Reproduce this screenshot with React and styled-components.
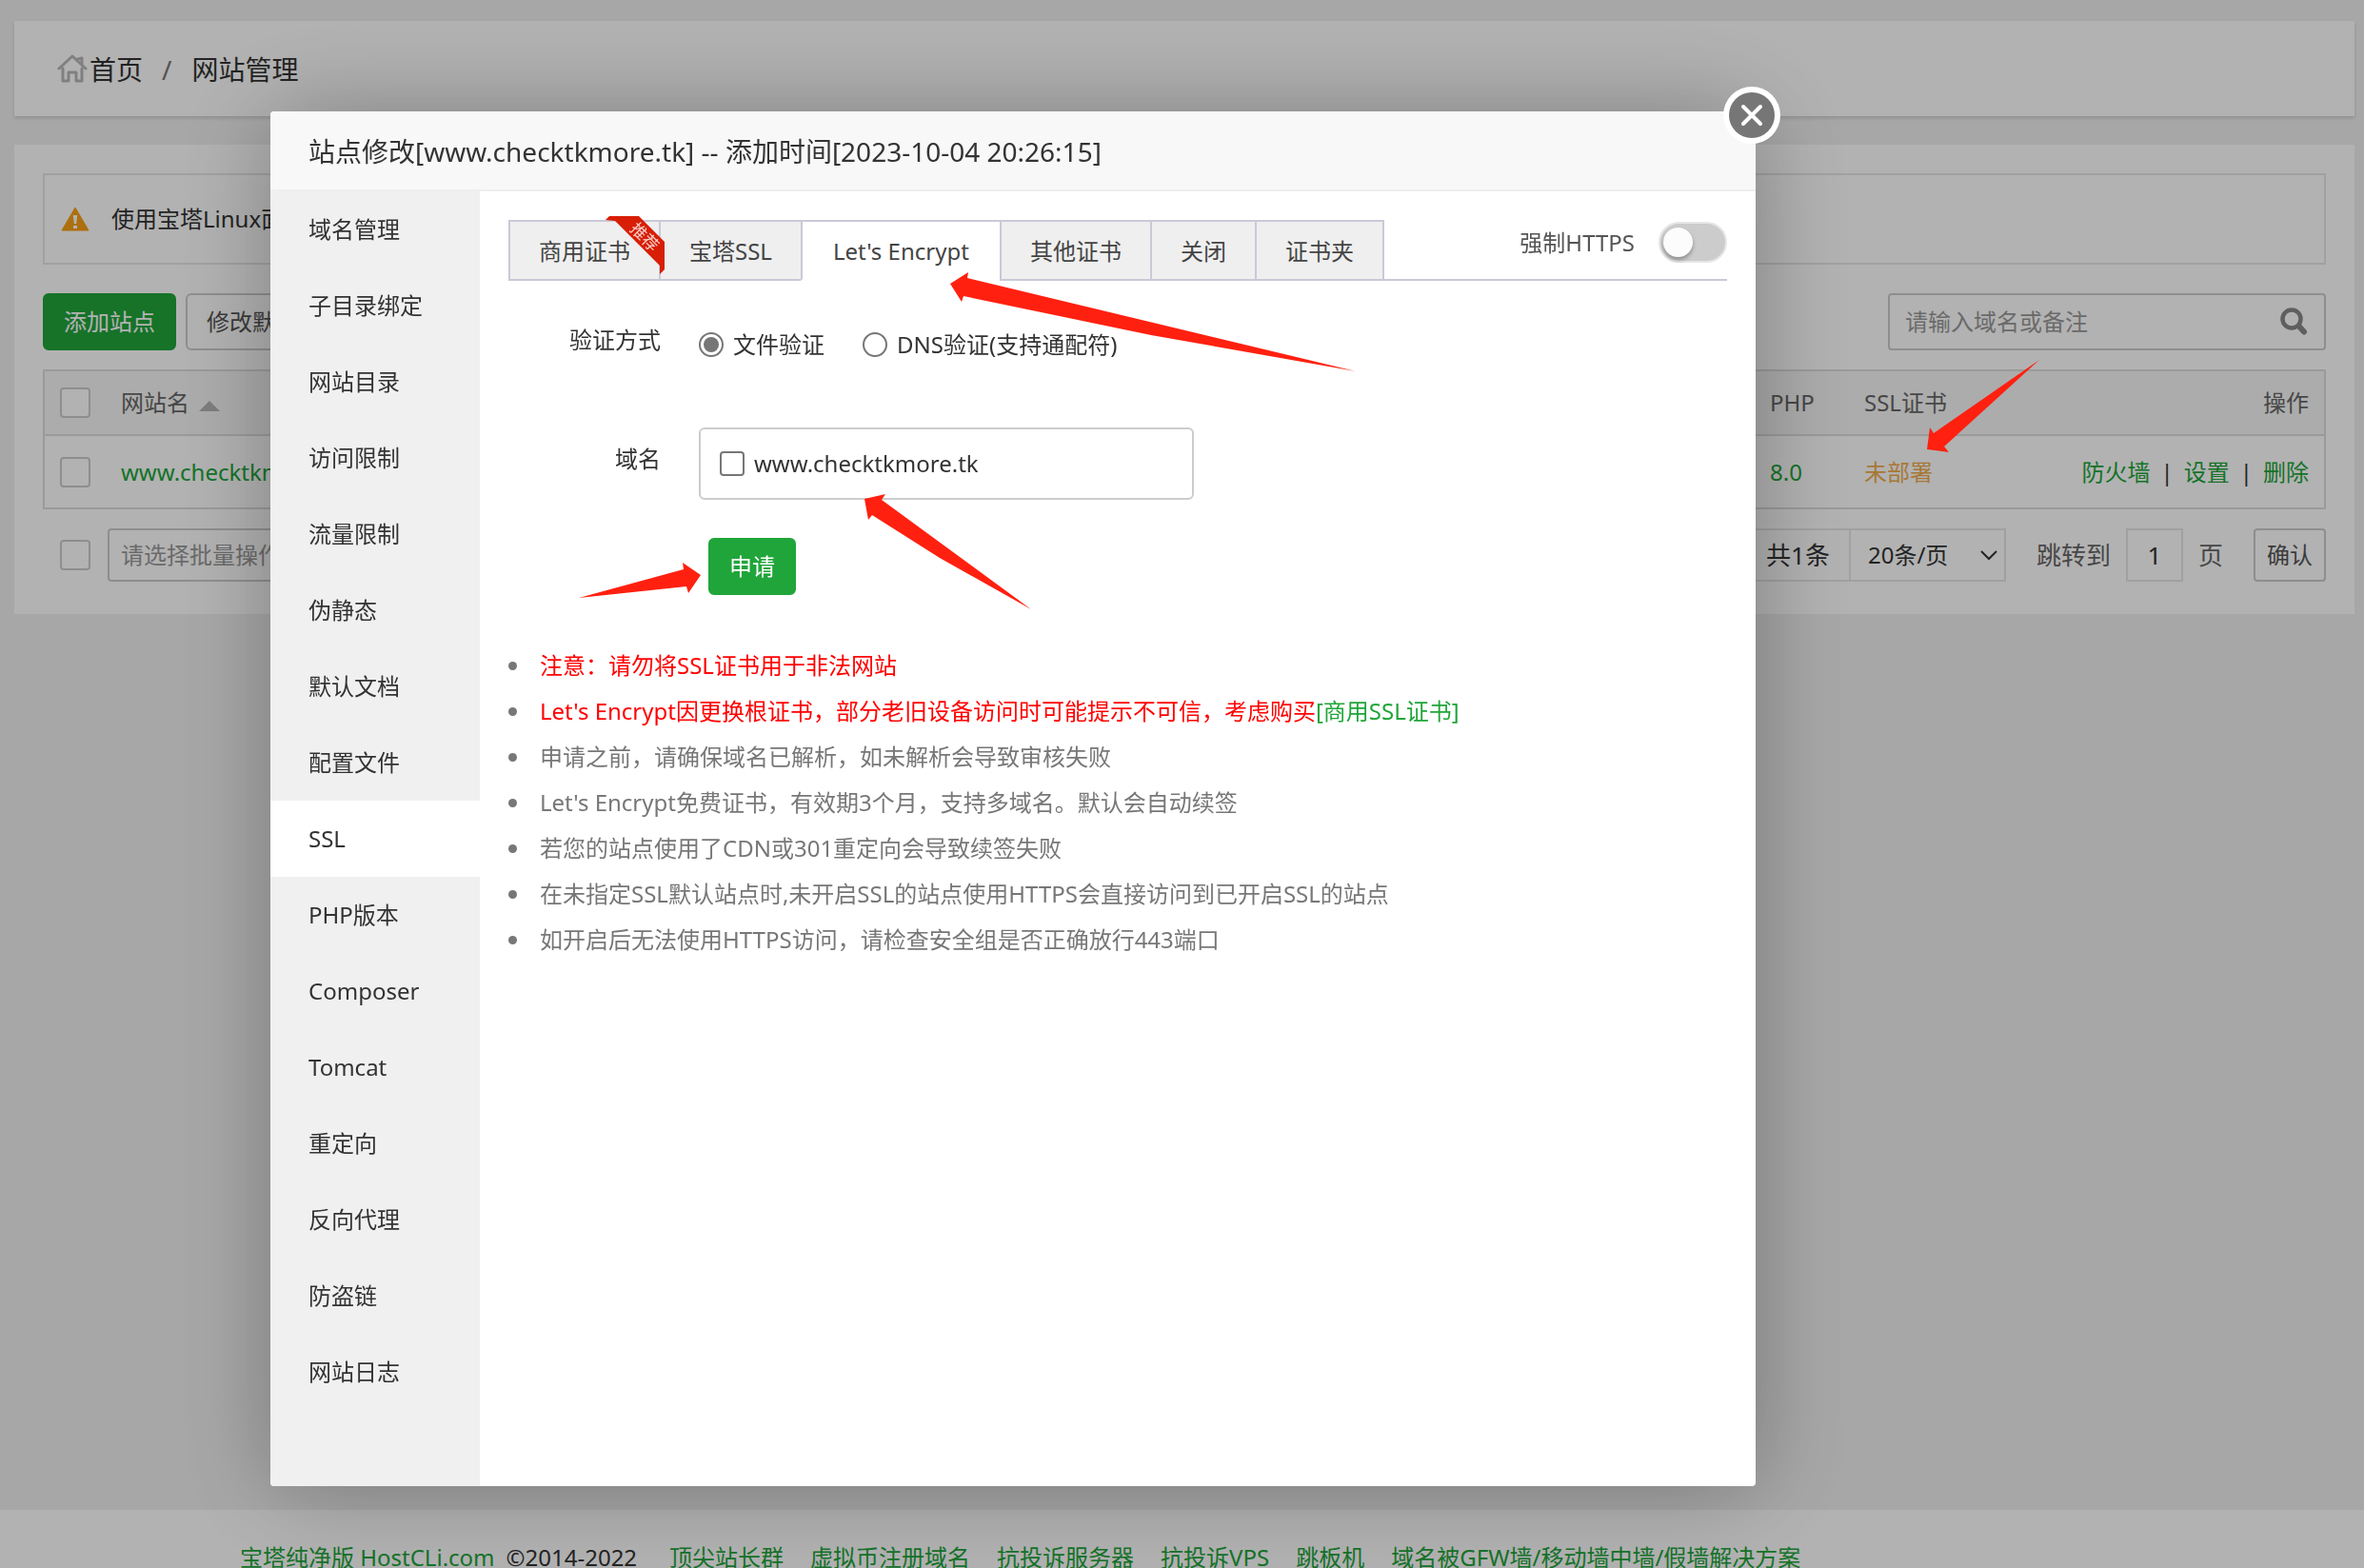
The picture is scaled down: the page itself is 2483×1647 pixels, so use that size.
import React from 'react'
import styled, { createGlobalStyle } from 'styled-components'

const green = '#20a53a'

const GlobalStyle = createGlobalStyle`
  * {
    box-sizing: border-box;
  }

  body {
    margin: 0;
    background: #f0f0f0;
    color: #333;
    font-family: "Noto Sans", "Noto Sans CJK SC", sans-serif;
    font-size: 24px;
    line-height: 36px;
  }

  button, input, select {
    margin: 0;
    font: inherit;
    color: inherit;
  }

  a {
    color: ${green};
    text-decoration: none;
  }
`

const Page = styled.div`
  display: flex;
  flex-direction: column;
  height: 100vh;
  padding-top: 22px;
  overflow: hidden;
`

const Panel = styled.section`
  margin: 0 10px 30px 15px;
  background: #fff;
`

const Breadcrumb = styled(Panel)`
  display: flex;
  align-items: center;
  height: 100px;
  padding: 2px 45px 0;
  font-size: 28px;
  box-shadow: 0 2px 4px rgba(0, 0, 0, 0.15);

  a {
    color: #333;
  }
`

const Slash = styled.span`
  padding: 0 21px 0 20px;
  color: #777;
`

const SitePanel = styled(Panel)`
  padding: 30px 30px 34px;
`

const Notice = styled.div`
  display: flex;
  align-items: center;
  gap: 23px;
  height: 96px;
  margin-bottom: 30px;
  padding: 0 17px;
  border: 2px solid #e6e6e6;
`

const Toolbar = styled.div`
  display: flex;
  gap: 10px;
  height: 60px;
  margin-bottom: 20px;
`

const Button = styled.button`
  height: 60px;
  padding: 0 20px;
  border: 2px solid ${({ $primary }) => ($primary ? green : '#ccc')};
  border-radius: 6px;
  background: ${({ $primary }) => ($primary ? green : '#fff')};
  color: ${({ $primary }) => ($primary ? '#fff' : '#555')};
`

const SearchBox = styled.label`
  display: flex;
  align-items: center;
  width: 460px;
  margin-left: auto;
  padding: 0 16px;
  border: 2px solid #ccc;
  border-radius: 4px;
  color: #888;

  input {
    flex: 1;
    min-width: 0;
    padding: 0;
    border: 0;
    outline: 0;
    background: none;
  }

  input::placeholder {
    color: #999;
  }
`

const Check = styled.input`
  display: block;
  appearance: none;
  flex: none;
  width: 32px;
  height: 32px;
  border: 2px solid #ccc;
  border-radius: 4px;
  background: #fff;
`

const TableFrame = styled.div`
  margin-bottom: 20px;
  border: 2px solid #ddd;
`

const Table = styled.table`
  width: 100%;
  border-spacing: 0;
  table-layout: fixed;

  th, td {
    padding: 0 16px;
    text-align: left;
    font-weight: 400;
    white-space: nowrap;
  }

  th {
    height: 68px;
    border-bottom: 2px solid #ddd;
    background: #f6f6f6;
    color: #666;
  }

  td {
    height: 75px;
  }

  th:last-child, td:last-child {
    text-align: right;
  }
`

const Col = styled.col`
  width: ${({ $width }) => $width}px;
`

const SortMark = styled.svg`
  margin-left: 10px;
`

const Pending = styled.a`
  color: #f0ad4e;
`

const Divider = styled.span`
  padding: 0 11px;
`

const Pager = styled.div`
  display: flex;
  align-items: center;
  height: 56px;
  padding-left: 18px;
  font-size: 26px;
  color: #666;
`

const BatchSelect = styled.select`
  appearance: none;
  width: 280px;
  height: 56px;
  margin: 0 auto 0 18px;
  padding: 0 12px;
  border: 2px solid #ccc;
  border-radius: 4px;
  background: #fff;
  color: #999;
  font-size: 24px;
`

const Total = styled.span`
  height: 56px;
  padding: 8px 20px;
  border: 2px solid #e6e6e6;
  border-right: 0;
  color: #333;
`

const PageSize = styled.div`
  display: grid;
  align-items: center;
  margin-right: 32px;

  select, svg {
    grid-area: 1 / 1;
  }

  select {
    appearance: none;
    width: 165px;
    height: 56px;
    padding: 0 18px;
    border: 2px solid #e6e6e6;
    background: #fff;
    color: #333;
    font-size: 24px;
  }

  svg {
    justify-self: end;
    margin-right: 8px;
    pointer-events: none;
  }
`

const PageInput = styled.input`
  width: 60px;
  height: 56px;
  margin: 0 16px;
  padding: 0;
  border: 2px solid #e6e6e6;
  background: #fff;
  text-align: center;
  color: #333;
`

const Confirm = styled(Button)`
  height: 56px;
  margin-left: 32px;
  padding: 0 12px;
  border-radius: 4px;
  font-size: 24px;
`

const Footer = styled.footer`
  display: flex;
  flex: none;
  gap: 28px;
  height: 61px;
  margin-top: auto;
  padding: 32px 0 0 252px;
  background: #fff;
  white-space: nowrap;
`

const Copyright = styled.span`
  display: flex;
  gap: 12px;
  padding-right: 6px;
`

const Overlay = styled.div`
  position: fixed;
  inset: 0;
  display: flex;
  padding: 117px 639px 86px 284px;
  background: rgba(0, 0, 0, 0.3);
`

const Modal = styled.div`
  position: relative;
  display: flex;
  flex: 1;
  flex-direction: column;
  min-width: 0;
  border-radius: 4px;
  background: #fff;
  box-shadow: 2px 2px 100px rgba(0, 0, 0, 0.3);
`

const ModalTitle = styled.h2`
  margin: 0;
  padding: 0 40px;
  height: 84px;
  border-bottom: 2px solid #eee;
  border-radius: 4px 4px 0 0;
  background: #f8f8f8;
  font-size: 28px;
  font-weight: 400;
  line-height: 84px;
`

const CloseButton = styled.button`
  position: absolute;
  top: -26px;
  right: -26px;
  width: 60px;
  height: 60px;
  padding: 0;
  border: 0;
  background: none;

  svg {
    display: block;
  }
`

const ModalBody = styled.div`
  display: flex;
  flex: 1;
`

const Sidebar = styled.nav`
  display: flex;
  flex-direction: column;
  width: 220px;
  border-radius: 0 0 0 4px;
  background: #f0f0f0;
`

const SideItem = styled.a`
  padding: 0 40px;
  background: ${({ $active }) => ($active ? '#fff' : 'none')};
  color: #333;
  line-height: 80px;
`

const Content = styled.div`
  flex: 1;
  min-width: 0;
  padding: 30px;
`

const TabRow = styled.div`
  display: flex;
  height: 64px;
`

const Tab = styled.button`
  position: relative;
  padding: 2px ${({ $active }) => ($active ? 32 : 30)}px 0;
  border: 2px solid #cac9d8;
  border-bottom-color: ${({ $active }) => ($active ? '#fff' : '#cac9d8')};
  background: ${({ $active }) => ($active ? '#fff' : '#efefef')};
  color: #444;
  white-space: nowrap;

  & + & {
    margin-left: -2px;
  }
`

const Ribbon = styled.svg`
  position: absolute;
  top: -7px;
  right: -7px;
  z-index: 1;
`

const ForceHttps = styled.label`
  display: flex;
  flex: 1;
  justify-content: flex-end;
  gap: 25px;
  padding-top: 2px;
  border-bottom: 2px solid #cac9d8;
  color: #555;
  line-height: 44px;
`

const Toggle = styled.input`
  appearance: none;
  width: 72px;
  height: 43px;
  padding: 4px 3px;
  border: 2px solid #e6e6e6;
  border-radius: 22px;
  background: #ccc;

  &::before {
    content: '';
    display: block;
    width: 31px;
    height: 31px;
    border-radius: 50%;
    background: #fcfcfc;
    box-shadow: 0 3px 4px rgba(0, 0, 0, 0.3);
  }
`

const Form = styled.form`
  display: grid;
  grid-template-columns: 160px 520px;
  column-gap: 40px;
  padding-top: 44px;
`

const FieldLabel = styled.span`
  text-align: right;
`

const Options = styled.div`
  display: flex;
  gap: 40px;
  height: 110px;
  padding-top: 5px;
`

const Option = styled.label`
  display: flex;
  align-items: center;
  gap: 10px;
  height: 36px;
  white-space: nowrap;
`

const Radio = styled.input`
  appearance: none;
  width: 26px;
  height: 26px;
  padding: 3px;
  border: 2px solid #767676;
  border-radius: 50%;
  background: #fff content-box;

  &:checked {
    background-color: #767676;
  }
`

const Domain = styled.div`
  display: flex;
  align-items: center;
  height: 76px;
  padding: 0 20px;
  border: 2px solid #ccc;
  border-radius: 6px;
`

const DomainLabel = styled(FieldLabel)`
  padding-top: 15px;
`

const DomainCheck = styled(Check)`
  width: 26px;
  height: 26px;
  border-color: #767676;
`

const Submit = styled(Button)`
  grid-column: 2;
  justify-self: start;
  margin: 40px 0 0 10px;
  width: 92px;
`

const Notes = styled.ul`
  margin: 50px 0 0;
  padding-left: 24px;
  color: #777;
  line-height: 48px;

  li {
    padding-left: 9px;
  }
`

const Warn = styled.span`
  color: #f00;
`

const Arrows = styled.svg`
  position: fixed;
  top: 0;
  left: 0;
  fill: #ff2010;
  pointer-events: none;
`

const HomeIcon = () => (
  <svg width="34" height="34" viewBox="0 0 34 34" fill="none" stroke="#b8b8b8" strokeWidth="3" strokeLinejoin="round" strokeLinecap="round" aria-hidden="true">
    <path d="M2 16 L16 3 L30 16 M22 6 L26 5 V11 M6 16 V29 H12 V20 H20 V29 H26 V16" />
  </svg>
)

const WarningIcon = () => (
  <svg width="30" height="26" viewBox="0 0 30 26" aria-hidden="true">
    <path d="M15 1 L29 25 H1 Z" fill="#fa9f15" stroke="#fa9f15" strokeWidth="1" strokeLinejoin="round" />
    <path d="M12.800 9 H17.200 L16.200 18 H13.800 Z M13 20 H17 V23 H13 Z" fill="#fff" />
  </svg>
)

const SearchIcon = () => (
  <svg width="30" height="30" viewBox="0 0 30 30" fill="none" stroke="#888" strokeLinecap="round" aria-hidden="true">
    <circle cx="12" cy="12" r="9.500" strokeWidth="4.500" />
    <path d="M20 20 L25 25.500" strokeWidth="6" />
  </svg>
)

const CloseIcon = () => (
  <svg width="60" height="60" viewBox="0 0 60 60" aria-hidden="true">
    <circle cx="30" cy="30" r="30" fill="#fff" />
    <circle cx="30" cy="30" r="24" fill="#767676" />
    <path d="M21 21 L39 39 M39 21 L21 39" stroke="#fff" strokeWidth="4" strokeLinecap="round" />
  </svg>
)

const menu = [
  '域名管理', '子目录绑定', '网站目录', '访问限制', '流量限制', '伪静态', '默认文档', '配置文件',
  'SSL', 'PHP版本', 'Composer', 'Tomcat', '重定向', '反向代理', '防盗链', '网站日志',
]

const tabs = ['商用证书', '宝塔SSL', "Let's Encrypt", '其他证书', '关闭', '证书夹']

const notes = [
  '申请之前，请确保域名已解析，如未解析会导致审核失败',
  "Let's Encrypt免费证书，有效期3个月，支持多域名。默认会自动续签",
  '若您的站点使用了CDN或301重定向会导致续签失败',
  '在未指定SSL默认站点时,未开启SSL的站点使用HTTPS会直接访问到已开启SSL的站点',
  '如开启后无法使用HTTPS访问，请检查安全组是否正确放行443端口',
]

const footerLinks = ['顶尖站长群', '虚拟币注册域名', '抗投诉服务器', '抗投诉VPS', '跳板机', '域名被GFW墙/移动墙中墙/假墙解决方案']

const SiteTable = () => (
  <TableFrame>
    <Table>
      <colgroup>
        <Col $width={64} />
        <col />
        <Col $width={99} />
        <Col $width={200} />
        <Col $width={299} />
      </colgroup>
      <thead>
        <tr>
          <th><Check type="checkbox" aria-label="全选" /></th>
          <th>
            网站名
            <SortMark width="22" height="12" viewBox="0 0 22 12"><path d="M0 12 L11 1 L22 12 Z" fill="#b4b4b4" /></SortMark>
          </th>
          <th>PHP</th>
          <th>SSL证书</th>
          <th>操作</th>
        </tr>
      </thead>
      <tbody>
        <tr>
          <td><Check type="checkbox" aria-label="选择站点" /></td>
          <td><a href="#site">www.checktkmore.tk</a></td>
          <td><a href="#php">8.0</a></td>
          <td><Pending href="#ssl">未部署</Pending></td>
          <td>
            <a href="#waf">防火墙</a>
            <Divider>|</Divider>
            <a href="#config">设置</a>
            <Divider>|</Divider>
            <a href="#delete">删除</a>
          </td>
        </tr>
      </tbody>
    </Table>
  </TableFrame>
)

const SslForm = () => (
  <Form>
    <FieldLabel>验证方式</FieldLabel>
    <Options>
      <Option>
        <Radio type="radio" name="verify" defaultChecked />
        文件验证
      </Option>
      <Option>
        <Radio type="radio" name="verify" />
        DNS验证(支持通配符)
      </Option>
    </Options>
    <DomainLabel>域名</DomainLabel>
    <Domain>
      <Option>
        <DomainCheck type="checkbox" />
        www.checktkmore.tk
      </Option>
    </Domain>
    <Submit type="button" $primary>申请</Submit>
  </Form>
)

const SiteModal = () => (
  <Overlay>
    <Modal role="dialog" aria-labelledby="modal-title">
      <ModalTitle id="modal-title">站点修改[www.checktkmore.tk] -- 添加时间[2023-10-04 20:26:15]</ModalTitle>
      <ModalBody>
        <Sidebar>
          {menu.map(item => (
            <SideItem key={item} href="#menu" $active={item === 'SSL'}>{item}</SideItem>
          ))}
        </Sidebar>
        <Content>
          <TabRow>
            {tabs.map((tab, i) => (
              <Tab key={tab} type="button" $active={i === 2}>
                {tab}
                {i === 0 && (
                  <Ribbon width="64" height="64" viewBox="0 0 64 64">
                    <path d="M1 5 L5 1 H36 L63 28 V57 L58 62 V53 L11 6 Z" fill="#d81e06" />
                    <text x="42" y="29" fill="#fff" fillOpacity="0.8" fontSize="17" textAnchor="middle" transform="rotate(45 42 23)">推荐</text>
                  </Ribbon>
                )}
              </Tab>
            ))}
            <ForceHttps>
              强制HTTPS
              <Toggle type="checkbox" role="switch" />
            </ForceHttps>
          </TabRow>
          <SslForm />
          <Notes>
            <li><Warn>注意：请勿将SSL证书用于非法网站</Warn></li>
            <li>
              <Warn>Let's Encrypt因更换根证书，部分老旧设备访问时可能提示不可信，考虑购买</Warn>
              <a href="#buy">[商用SSL证书]</a>
            </li>
            {notes.map(note => <li key={note}>{note}</li>)}
          </Notes>
        </Content>
      </ModalBody>
      <CloseButton type="button" aria-label="关闭窗口"><CloseIcon /></CloseButton>
    </Modal>
  </Overlay>
)

const App = () => (
  <>
    <GlobalStyle />
    <Page>
      <Breadcrumb>
        <HomeIcon />
        <a href="#home">首页</a>
        <Slash>/</Slash>
        <span>网站管理</span>
      </Breadcrumb>
      <SitePanel>
        <Notice>
          <WarningIcon />
          使用宝塔Linux面板
        </Notice>
        <Toolbar>
          <Button type="button" $primary>添加站点</Button>
          <Button type="button">修改默认页</Button>
          <SearchBox>
            <input type="text" placeholder="请输入域名或备注" />
            <SearchIcon />
          </SearchBox>
        </Toolbar>
        <SiteTable />
        <Pager>
          <Check type="checkbox" aria-label="批量选择" />
          <BatchSelect aria-label="批量操作">
            <option>请选择批量操作</option>
          </BatchSelect>
          <Total>共1条</Total>
          <PageSize>
            <select aria-label="每页条数">
              <option>20条/页</option>
            </select>
            <svg width="20" height="12" viewBox="0 0 20 12" fill="none" stroke="#333" strokeWidth="2">
              <path d="M2 2 L10 10 L18 2" />
            </svg>
          </PageSize>
          <label htmlFor="page">跳转到</label>
          <PageInput id="page" type="text" defaultValue="1" />
          页
          <Confirm type="button">确认</Confirm>
        </Pager>
      </SitePanel>
      <Footer>
        <Copyright>
          <a href="#hostcli">宝塔纯净版 HostCLi.com</a>
          ©2014-2022
        </Copyright>
        {footerLinks.map(link => <a key={link} href="#link">{link}</a>)}
      </Footer>
    </Page>
    <SiteModal />
    <Arrows width="2483" height="1647" viewBox="0 0 2483 1647" aria-hidden="true">
      <path d="M998 298 L1017 286 L1016 292 L1424 390 L1209 352 L1012 311 L1010 317 Z" />
      <path d="M908 524 L930 519 L926 525 L1083 640 L987 586 L916 541 L912 546 Z" />
      <path d="M736 604 L717 591 L718 598 L608 628 L721 616 L723 623 Z" />
      <path d="M2024 472 L2027 449 L2031 455 L2142 378 L2042 469 L2047 475 Z" />
    </Arrows>
  </>
)

export default App
